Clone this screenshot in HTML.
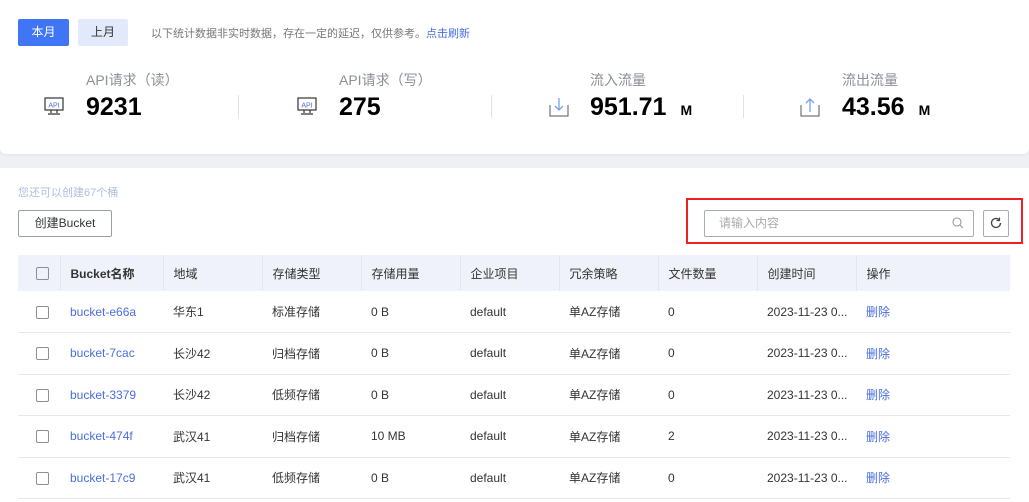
<!DOCTYPE html>
<html><head><meta charset="utf-8"><style>
*{box-sizing:border-box;margin:0;padding:0}
body{width:1029px;height:502px;overflow:hidden;background:#eef0f4;font-family:"Liberation Sans","Noto Sans CJK SC",sans-serif;font-size:12px;color:#333;position:relative}
.top{position:absolute;left:0;top:0;width:1029px;height:154px;background:#fff;border-radius:0 0 6px 6px;box-shadow:0 1px 3px rgba(0,0,0,.06)}
.bot{position:absolute;left:0;top:168px;width:1029px;height:334px;background:#fff}
.abs{position:absolute}
.btn{position:absolute;height:27px;border-radius:2px;text-align:center;line-height:27px;font-size:12px}
.lbl{position:absolute;font-size:14px;color:#8a8f99}
.num{position:absolute;font-size:25px;font-weight:bold;color:#000;font-family:"Liberation Sans",sans-serif}
.unit{font-size:14px;margin-left:14px}
.sep{position:absolute;top:95px;width:1px;height:23px;background:#dde1e8}
table{position:absolute;left:18px;top:255px;width:992px;border-collapse:collapse}
th{background:#eff2fa;height:36px;text-align:left;font-weight:bold;font-size:12px;color:#333;padding-left:10px;border-right:1px solid #e2e6ee}
th:last-child{border-right:none}
td{height:41.5px;border-bottom:1px solid #e6e8ec;padding-left:10px;font-size:12px;color:#333}
.cb{width:13px;height:13px;border:1px solid #8a8f99;border-radius:2px;display:inline-block;vertical-align:middle;margin-left:8px}
a{color:#4a6ee0;text-decoration:none}
</style></head><body>
<div class="top">
<div class="btn" style="left:18px;top:19px;width:51px;background:#4076f5;color:#fff">本月</div>
<div class="btn" style="left:78px;top:19px;width:50px;background:#e2e9fa;color:#333">上月</div>
<div class="abs" style="left:151px;top:25px;font-size:11px;color:#777">以下统计数据非实时数据，存在一定的延迟，仅供参考。<span style="color:#4a6ee0">点击刷新</span></div>

<div class="lbl" style="left:86px;top:70px">API请求（读）</div>
<svg class="abs" style="left:44px;top:97px" width="20" height="20" viewBox="0 0 20 20"><rect x="1" y="1" width="18" height="12" fill="none" stroke="#333" stroke-width="1.2"/><text x="10" y="10.5" font-size="7" fill="#4a6ee0" text-anchor="middle" font-family="Liberation Sans">API</text><path d="M7 13v3M13 13v3M4 17h12" stroke="#333" stroke-width="1.2" fill="none"/></svg>
<div class="num" style="left:86px;top:93px">9231</div>
<div class="sep" style="left:238px"></div>

<div class="lbl" style="left:339px;top:70px">API请求（写）</div>
<svg class="abs" style="left:297px;top:97px" width="20" height="20" viewBox="0 0 20 20"><rect x="1" y="1" width="18" height="12" fill="none" stroke="#333" stroke-width="1.2"/><text x="10" y="10.5" font-size="7" fill="#4a6ee0" text-anchor="middle" font-family="Liberation Sans">API</text><path d="M7 13v3M13 13v3M4 17h12" stroke="#333" stroke-width="1.2" fill="none"/></svg>
<div class="num" style="left:339px;top:93px">275</div>
<div class="sep" style="left:491px"></div>

<div class="lbl" style="left:590px;top:70px">流入流量</div>
<svg class="abs" style="left:549px;top:97px" width="20" height="20" viewBox="0 0 20 20"><path d="M1 8v11h18V8" stroke="#555" stroke-width="1" fill="none"/><path d="M10 1v12M6 9l4 4 4-4" stroke="#7aa0f0" stroke-width="1.3" fill="none"/></svg>
<div class="num" style="left:590px;top:93px">951.71<span class="unit">M</span></div>
<div class="sep" style="left:743px"></div>

<div class="lbl" style="left:842px;top:70px">流出流量</div>
<svg class="abs" style="left:800px;top:97px" width="20" height="20" viewBox="0 0 20 20"><path d="M1 8v11h18V8" stroke="#555" stroke-width="1" fill="none"/><path d="M10 15V2M6 6l4-4 4 4" stroke="#7aa0f0" stroke-width="1.3" fill="none"/></svg>
<div class="num" style="left:842px;top:93px">43.56<span class="unit">M</span></div>
</div>

<div class="bot"></div>
<div class="abs" style="left:18px;top:184px;font-size:11px;color:#b0bdd8">您还可以创建67个桶</div>
<div class="btn" style="left:18px;top:210px;width:94px;border:1px solid #9aa0a8;background:#fff;line-height:25px">创建Bucket</div>
<div class="abs" style="left:686px;top:198px;width:337px;height:46px;border:2px solid #f02020"></div>
<div class="abs" style="left:704px;top:210px;width:270px;height:27px;border:1px solid #a8acb4;border-radius:2px;color:#aaa;padding-left:14px;line-height:25px">请输入内容</div>
<svg class="abs" style="left:952px;top:217px" width="12" height="12" viewBox="0 0 12 12"><circle cx="5" cy="5" r="4" fill="none" stroke="#999" stroke-width="1.1"/><path d="M8 8l3 3" stroke="#999" stroke-width="1.1"/></svg>
<div class="abs" style="left:983px;top:210px;width:26px;height:27px;border:1px solid #a8acb4;border-radius:2px"></div>
<svg class="abs" style="left:990px;top:217px" width="12" height="12" viewBox="0 0 12 12"><path d="M10.5 6A4.5 4.5 0 1 1 9 2.6" fill="none" stroke="#444" stroke-width="1.3"/><path d="M9.5 0.5v3h-3" fill="none" stroke="#444" stroke-width="1.2"/></svg>

<table>
<tr><th style="width:42px;padding-left:10px"><span class="cb" style="margin-left:8px"></span></th><th style="width:103px">Bucket名称</th><th style="width:99px;font-weight:normal">地域</th><th style="width:99px;font-weight:normal">存储类型</th><th style="width:99px;font-weight:normal">存储用量</th><th style="width:99px;font-weight:normal">企业项目</th><th style="width:99px;font-weight:normal">冗余策略</th><th style="width:99px;font-weight:normal">文件数量</th><th style="width:99px;font-weight:normal">创建时间</th><th style="font-weight:normal">操作</th></tr>
<tr><td style="padding-left:10px"><span class="cb"></span></td><td><a>bucket-e66a</a></td><td>华东1</td><td>标准存储</td><td>0 B</td><td>default</td><td>单AZ存储</td><td>0</td><td>2023-11-23 0...</td><td><a>删除</a></td></tr>
<tr><td style="padding-left:10px"><span class="cb"></span></td><td><a>bucket-7cac</a></td><td>长沙42</td><td>归档存储</td><td>0 B</td><td>default</td><td>单AZ存储</td><td>0</td><td>2023-11-23 0...</td><td><a>删除</a></td></tr>
<tr><td style="padding-left:10px"><span class="cb"></span></td><td><a>bucket-3379</a></td><td>长沙42</td><td>低频存储</td><td>0 B</td><td>default</td><td>单AZ存储</td><td>0</td><td>2023-11-23 0...</td><td><a>删除</a></td></tr>
<tr><td style="padding-left:10px"><span class="cb"></span></td><td><a>bucket-474f</a></td><td>武汉41</td><td>归档存储</td><td>10 MB</td><td>default</td><td>单AZ存储</td><td>2</td><td>2023-11-23 0...</td><td><a>删除</a></td></tr>
<tr><td style="padding-left:10px"><span class="cb"></span></td><td><a>bucket-17c9</a></td><td>武汉41</td><td>低频存储</td><td>0 B</td><td>default</td><td>单AZ存储</td><td>0</td><td>2023-11-23 0...</td><td><a>删除</a></td></tr>
</table>
</body></html>
